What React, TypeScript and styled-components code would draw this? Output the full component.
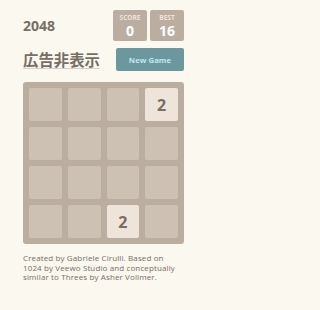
import React from "react";
import styled, { createGlobalStyle } from "styled-components";

const Global = createGlobalStyle`
  html, body { margin: 0; padding: 0; background: #faf8ef; }
  body { font-family: "Open Sans", "Liberation Sans", Arial, sans-serif; color: #776e65; }
`;

const Page = styled.div`
  width: 207px;
  box-sizing: border-box;
  padding: 10px 23px 0;
`;

const TopRow = styled.div`
  display: flex;
  justify-content: space-between;
  align-items: center;
`;

const Title = styled.h1`
  margin: 0;
  font-size: 14px;
  font-weight: 700;
  line-height: 1;
  color: #776e65;
`;

const Scores = styled.div`
  display: flex;
  gap: 3px;
`;

const ScoreBox = styled.div`
  width: 34px;
  height: 31px;
  background: #bbada0;
  border-radius: 2px;
  display: flex;
  flex-direction: column;
  align-items: center;
  box-sizing: border-box;
  padding-top: 4px;
`;

const ScoreLabel = styled.div`
  font-size: 6.5px;
  font-weight: 700;
  color: #eee4da;
  line-height: 8px;
`;

const ScoreValue = styled.div`
  font-size: 14px;
  font-weight: 700;
  color: #ffffff;
  line-height: 14px;
  margin-top: 2px;
`;

const SecondRow = styled.div`
  display: flex;
  justify-content: space-between;
  align-items: center;
  margin-top: 7px;
`;

const AdLink = styled.a`
  font-family: "Noto Sans CJK JP", sans-serif;
  font-size: 15.4px;
  font-weight: 700;
  color: #776e65;
  text-decoration: underline;
  text-decoration-color: #d8d0c8;
  text-underline-offset: 2px;
  line-height: 1;
`;

const NewGame = styled.button`
  width: 68px;
  height: 23px;
  border: 0;
  border-radius: 2px;
  background: #6b979e;
  color: #c4e6f0;
  font-family: "Open Sans", "Liberation Sans", Arial, sans-serif;
  font-size: 7.8px;
  font-weight: 700;
  padding: 0;
`;

const Board = styled.div`
  margin-top: 11px;
  background: #bbada0;
  border-radius: 3px;
  padding: 6px;
  display: grid;
  grid-template-columns: repeat(4, 1fr);
  gap: 6px;
`;

const Cell = styled.div<{ $value?: number }>`
  height: 33px;
  border-radius: 2px;
  background: ${(p) => (p.$value ? "#eee4da" : "#cdc1b4")};
  display: flex;
  align-items: center;
  justify-content: center;
  font-size: 16px;
  font-weight: 700;
  color: #776e65;
`;

const Footer = styled.p`
  margin: 9px 0 0;
  font-size: 8px;
  line-height: 9.7px;
  letter-spacing: 0.12px;
  color: #776e65;
`;

const grid = [
  0, 0, 0, 2,
  0, 0, 0, 0,
  0, 0, 0, 0,
  0, 0, 2, 0,
];

export default function App() {
  return (
    <>
      <Global />
      <Page>
        <TopRow>
          <Title>2048</Title>
          <Scores>
            <ScoreBox>
              <ScoreLabel>SCORE</ScoreLabel>
              <ScoreValue>0</ScoreValue>
            </ScoreBox>
            <ScoreBox>
              <ScoreLabel>BEST</ScoreLabel>
              <ScoreValue>16</ScoreValue>
            </ScoreBox>
          </Scores>
        </TopRow>
        <SecondRow>
          <AdLink>広告非表示</AdLink>
          <NewGame>New Game</NewGame>
        </SecondRow>
        <Board>
          {grid.map((v, i) => (
            <Cell key={i} $value={v}>{v ? v : null}</Cell>
          ))}
        </Board>
        <Footer>
          Created by Gabriele Cirulli. Based on 1024 by Veewo Studio and conceptually similar to Threes by Asher Vollmer.
        </Footer>
      </Page>
    </>
  );
}
